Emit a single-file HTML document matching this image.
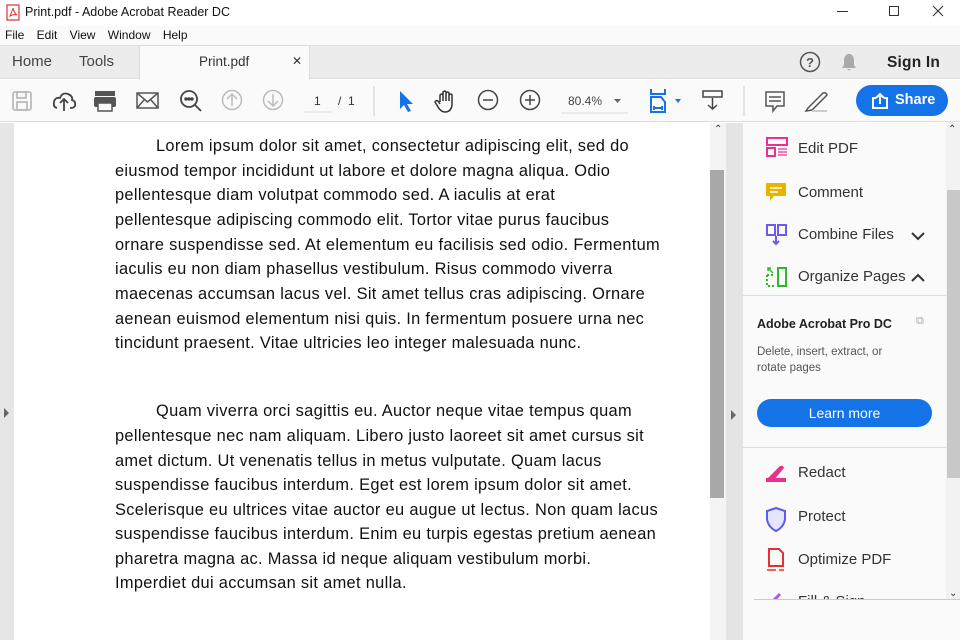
<!DOCTYPE html>
<html><head><meta charset="utf-8"><style>
*{margin:0;padding:0;box-sizing:border-box}
body{width:960px;height:640px;overflow:hidden;background:#fff;font-family:"Liberation Sans",sans-serif;position:relative;color:#222}
.abs{position:absolute}
.doc div{position:absolute;left:115px;white-space:nowrap;font-size:16.4px;color:#111;letter-spacing:0.32px}
.tool{position:absolute;left:766px;font-size:15px;color:#333}
</style></head><body>
<div class="abs" style="left:0;top:0;width:960px;height:26px;background:#fff"></div>
<svg class="abs" style="left:6px;top:4px" width="14" height="17"><rect x="1" y="1" width="12" height="15" fill="#fff" stroke="#d33" stroke-width="1.2"/><path d="M4 12 Q7 5 7 4 Q8 9 11 11 Q7 10 4 12Z" fill="none" stroke="#d33"/></svg>
<div class="abs" style="left:25px;top:5px;font-size:12.5px;color:#111">Print.pdf - Adobe Acrobat Reader DC</div>
<div class="abs" style="left:837px;top:11px;width:11px;height:1px;background:#333"></div>
<div class="abs" style="left:889px;top:6px;width:10px;height:10px;border:1px solid #333"></div>
<svg class="abs" style="left:932px;top:5px" width="12" height="12"><path d="M1 1L11 11M11 1L1 11" stroke="#333" stroke-width="1.1"/></svg>
<div class="abs" style="left:0;top:26px;width:960px;height:19px;background:#fafafa"></div>
<div class="abs" style="left:5px;top:28px;font-size:12px;color:#111;word-spacing:9px">File Edit View Window Help</div>
<div class="abs" style="left:0;top:45px;width:960px;height:34px;background:#ececec;border-top:1px solid #ddd;border-bottom:1px solid #ddd"></div>
<div class="abs" style="left:139px;top:46px;width:171px;height:34px;background:#fafafa;border-left:1px solid #ddd;border-right:1px solid #ddd"></div>
<div class="abs" style="left:12px;top:53px;font-size:15px;color:#444">Home</div>
<div class="abs" style="left:79px;top:53px;font-size:15px;color:#444">Tools</div>
<div class="abs" style="left:199px;top:54px;font-size:13.5px;color:#333">Print.pdf</div>
<div class="abs" style="left:292px;top:54px;font-size:12px;color:#333">✕</div>
<svg class="abs" style="left:799px;top:51px" width="22" height="22"><circle cx="11" cy="11" r="9.5" fill="none" stroke="#555" stroke-width="1.5"/><text x="11" y="16" font-size="13" text-anchor="middle" fill="#555" font-family="Liberation Sans" font-weight="bold">?</text></svg>
<svg class="abs" style="left:840px;top:52px" width="18" height="20"><path d="M9 2C5 2 4 6 4 9L4 13L2 16L16 16L14 13L14 9C14 6 13 2 9 2Z M7 17Q9 20 11 17Z" fill="#aaa"/></svg>
<div class="abs" style="left:887px;top:54px;font-size:15.5px;color:#222;font-weight:bold;letter-spacing:0.2px">Sign In</div>
<div class="abs" style="left:0;top:80px;width:960px;height:42px;background:#fafafa;border-bottom:1px solid #ddd"></div>
<svg class="abs" style="left:0;top:84px" width="960" height="34" fill="none" stroke-width="1.8">
 <g stroke="#bbb"><rect x="13" y="8" width="18" height="18" rx="2"/><rect x="17" y="8" width="9" height="6"/><rect x="17" y="18" width="10" height="8"/></g>
 <g stroke="#444"><path d="M57 24 Q53 23 54 18 Q55 13 60 14 Q62 8 68 10 Q73 12 72 16 Q76 17 75 22 Q74 24 70 24 M64 27 L64 15 M60 19 L64 15 L68 19"/></g>
 <g fill="#555" stroke="none"><rect x="95" y="7" width="20" height="5"/><rect x="94" y="13" width="22" height="10" rx="2"/><rect x="98" y="19" width="14" height="8" fill="#fafafa" stroke="#555" stroke-width="1.5"/></g>
 <g stroke="#555" stroke-width="1.5"><rect x="137" y="9" width="21" height="15"/><path d="M137 9 L147.5 18 L158 9 M137 24 L144 16 M158 24 L151 16"/></g>
 <g stroke="#444"><circle cx="189" cy="15" r="8"/><path d="M195 21 L201 27"/><circle cx="186" cy="15" r="0.8" fill="#444"/><circle cx="189" cy="15" r="0.8" fill="#444"/><circle cx="192" cy="15" r="0.8" fill="#444"/></g>
 <g stroke="#bbb" stroke-width="1.5"><circle cx="232" cy="16" r="9.5"/><path d="M232 22V10M227 15L232 10L237 15"/><circle cx="273" cy="16" r="9.5"/><path d="M273 10V22M268 17L273 22L278 17"/></g>
 <path d="M304 28H332" stroke="#ddd" stroke-width="1"/>
 <path d="M374 2V32M744 2V32" stroke="#ddd" stroke-width="1.5"/>
 <path d="M400 7 L400 25 L404 21 L408 28 L411 27 L407 20 L413 20Z" fill="#1473e6" stroke="none"/>
 <g stroke="#333" stroke-width="1.5"><path d="M440 18 L440 11 Q442 9 443 11 L443 17 M443 11 L443 8 Q445 6 446 8 L446 17 M446 9 Q448 7 449 9 L449 17 M449 11 Q451 9 452 11 L452 21 Q451 28 445 28 Q441 28 438 23 L435 18 Q436 16 438 17 L440 20"/></g>
 <g stroke="#444" stroke-width="1.5"><circle cx="488" cy="16" r="9.5"/><path d="M483 16H493"/><circle cx="530" cy="16" r="9.5"/><path d="M525 16H535M530 11V21"/></g>
 <path d="M561 29H628" stroke="#ddd" stroke-width="1"/>
 <path d="M614 15 L621 15 L617.5 19Z" fill="#666" stroke="none"/>
 <g stroke="#1473e6" stroke-width="2"><path d="M651 5V10H665V5 M651 12V28H665V18L661 13H651 M654 24H662M654 22V26M662 22V26"/></g>
 <path d="M675 15 L681 15 L678 19Z" fill="#1473e6" stroke="none"/>
 <g stroke="#444" stroke-width="1.5"><rect x="703" y="7" width="19" height="6"/><path d="M712.5 14V25M708 21L712.5 25L717 21"/></g>
 <g stroke="#555" stroke-width="1.5"><path d="M766 8H784V22H777L773 27V22H766Z M769 13H781M769 17H781"/></g>
 <g stroke="#555" stroke-width="1.5"><path d="M808 24 L823 9 Q826 8 827 11 L812 26 L806 27Z"/><path d="M812 27H827" stroke="#ccc" stroke-width="2"/></g>
</svg>
<div class="abs" style="left:314px;top:94px;font-size:12px;color:#333">1</div>
<div class="abs" style="left:338px;top:94px;font-size:12px;color:#333">/&nbsp;&nbsp;1</div>
<div class="abs" style="left:568px;top:94px;font-size:12px;color:#444">80.4%</div>
<div class="abs" style="left:856px;top:85px;width:92px;height:31px;border-radius:16px;background:#1473e6;color:#fff;font-size:14.5px;font-weight:bold"><svg style="position:absolute;left:15px;top:7px" width="18" height="17" fill="none" stroke="#fff" stroke-width="2"><path d="M5 6H2V16H16V6H13M9 12V2M5 6L9 2L13 6"/></svg><span style="position:absolute;left:39px;top:7px">Share</span></div>
<div class="abs" style="left:0;top:123px;width:14px;height:517px;background:#e6e6e6"></div>
<div class="abs" style="left:4px;top:408px;width:0;height:0;border-top:5px solid transparent;border-bottom:5px solid transparent;border-left:5px solid #666"></div>
<div class="abs" style="left:710px;top:123px;width:16px;height:517px;background:#f4f4f4"></div>
<div class="abs" style="left:714px;top:124px;font-size:10px;color:#333">⌃</div>
<div class="abs" style="left:710px;top:170px;width:14px;height:328px;background:#a8a8a8"></div>
<div class="abs" style="left:726px;top:123px;width:17px;height:517px;background:#e4e4e4"></div>
<div class="abs" style="left:731px;top:410px;width:0;height:0;border-top:5px solid transparent;border-bottom:5px solid transparent;border-left:5px solid #666"></div>
<div class="abs" style="left:743px;top:123px;width:203px;height:517px;background:#fafafa"></div>
<div class="abs" style="left:946px;top:123px;width:14px;height:476px;background:#f2f2f2"></div>
<div class="abs" style="left:948px;top:124px;font-size:10px;color:#333">⌃</div>
<div class="abs" style="left:947px;top:190px;width:13px;height:288px;background:#c8c8c8"></div>
<div class="abs" style="left:949px;top:588px;font-size:10px;color:#333">⌄</div>
<div class="abs" style="left:743px;top:295px;width:203px;height:1px;background:#ddd"></div>
<div class="abs" style="left:743px;top:447px;width:203px;height:1px;background:#ddd"></div>

<svg class="abs" style="left:760px;top:130px" width="30" height="470" fill="none" stroke-width="2">
 <g stroke="#e8308c"><rect x="7" y="8" width="20" height="7"/><rect x="7" y="18" width="8" height="8"/><path d="M18 19H27M18 22H27M18 25H27" stroke-width="1.3"/></g>
 <path d="M6 53H26V66H14L10 71V66H6Z" fill="#e8b400" stroke="none"/><path d="M10 58H22M10 62H18" stroke="#fff" stroke-width="1.5"/>
 <g stroke="#6b5bf0"><rect x="7" y="95" width="8" height="10"/><rect x="18" y="95" width="8" height="10"/><path d="M16 106V114M13 111L16 114L19 111"/></g>
 <g stroke="#2db82d"><rect x="18" y="138" width="8" height="18"/><path d="M7 145V156H15M7 145H15" stroke-dasharray="2 2"/><path d="M8 138L13 143M8 141V138H11" stroke-width="1.5"/></g>
 <g><path d="M8 348 L20 336 Q23 335 24 338 L13 351Z" fill="#e8308c"/><rect x="6" y="348" width="20" height="4" fill="#e8308c" stroke="none"/></g>
 <path d="M16 378 L25 381 V389 Q24 397 16 401 Q8 397 7 389 V381Z" stroke="#5b5bf0" fill="#e5e5fb"/>
 <g stroke="#e53030"><path d="M9 419H19L23 423V436H9Z"/><path d="M7 440H16M19 440H24" stroke-width="1.5"/></g>
 <path d="M12 472L20 464" stroke="#a85cf0" stroke-width="3"/>
</svg>
<div class="tool" style="left:798px;top:140px">Edit PDF</div>
<div class="tool" style="left:798px;top:184px">Comment</div>
<div class="tool" style="left:798px;top:226px">Combine Files</div>
<div class="tool" style="left:798px;top:268px">Organize Pages</div>
<svg class="abs" style="left:910px;top:228px" width="16" height="60" fill="none" stroke="#333" stroke-width="2"><path d="M2 5L8 11L14 5M2 53L8 47L14 53"/></svg>
<div class="abs" style="left:757px;top:317px;font-size:12.5px;font-weight:bold;color:#222">Adobe Acrobat Pro DC</div>
<div class="abs" style="left:916px;top:315px;width:14px;height:14px;font-size:11px;color:#aaa">⧉</div>
<div class="abs" style="left:757px;top:344px;font-size:11.5px;color:#555;line-height:16px">Delete, insert, extract, or<br>rotate pages</div>
<div class="abs" style="left:757px;top:399px;width:175px;height:28px;border-radius:14px;background:#1473e6;color:#fff;font-size:14px;text-align:center;line-height:28px">Learn more</div>
<div class="tool" style="left:798px;top:464px">Redact</div>
<div class="tool" style="left:798px;top:508px">Protect</div>
<div class="tool" style="left:798px;top:551px">Optimize PDF</div>
<div class="tool" style="left:798px;top:593px;height:6px;overflow:hidden">Fill &amp; Sign</div>
<div class="abs" style="left:754px;top:599px;width:206px;height:41px;background:#fafafa;border-top:1px solid #ccc"></div>

<div class="doc">
<div style="top:137px;left:156px">Lorem ipsum dolor sit amet, consectetur adipiscing elit, sed do</div>
<div style="top:162px">eiusmod tempor incididunt ut labore et dolore magna aliqua. Odio</div>
<div style="top:186px">pellentesque diam volutpat commodo sed. A iaculis at erat</div>
<div style="top:211px">pellentesque adipiscing commodo elit. Tortor vitae purus faucibus</div>
<div style="top:236px">ornare suspendisse sed. At elementum eu facilisis sed odio. Fermentum</div>
<div style="top:260px">iaculis eu non diam phasellus vestibulum. Risus commodo viverra</div>
<div style="top:285px">maecenas accumsan lacus vel. Sit amet tellus cras adipiscing. Ornare</div>
<div style="top:310px">aenean euismod elementum nisi quis. In fermentum posuere urna nec</div>
<div style="top:334px">tincidunt praesent. Vitae ultricies leo integer malesuada nunc.</div>
<div style="top:402px;left:156px">Quam viverra orci sagittis eu. Auctor neque vitae tempus quam</div>
<div style="top:427px">pellentesque nec nam aliquam. Libero justo laoreet sit amet cursus sit</div>
<div style="top:452px">amet dictum. Ut venenatis tellus in metus vulputate. Quam lacus</div>
<div style="top:476px">suspendisse faucibus interdum. Eget est lorem ipsum dolor sit amet.</div>
<div style="top:501px">Scelerisque eu ultrices vitae auctor eu augue ut lectus. Non quam lacus</div>
<div style="top:525px">suspendisse faucibus interdum. Enim eu turpis egestas pretium aenean</div>
<div style="top:550px">pharetra magna ac. Massa id neque aliquam vestibulum morbi.</div>
<div style="top:574px">Imperdiet dui accumsan sit amet nulla.</div>
</div>
</body></html>
